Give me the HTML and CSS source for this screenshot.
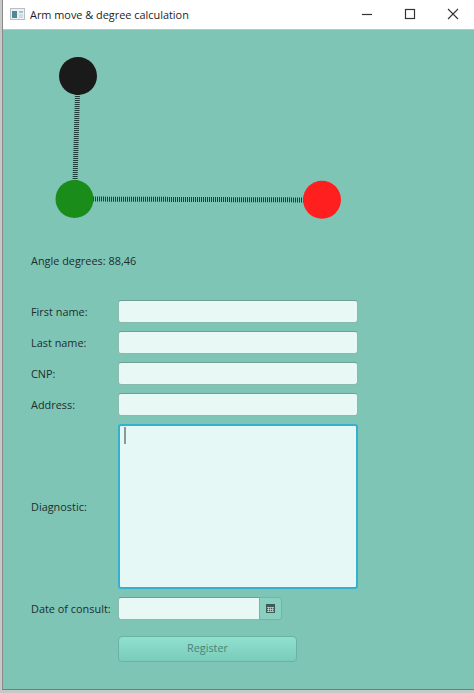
FILE: index.html
```html
<!DOCTYPE html>
<html lang="en">

<head>
    <meta charset="UTF-8">
    <meta name="viewport" content="width=device-width, initial-scale=1.0">
    <title>Arm move &amp; degree calculation</title>
    <link rel="stylesheet" href="styles.css">
</head>

<body>
    <div class="janela">
        <div class="titulo">
            <svg class="icone" width="15" height="13" viewBox="0 0 15 13">
                <rect x="0.5" y="0.5" width="14" height="11" fill="#eef0f2" stroke="#b9bec2"></rect>
                <rect x="2" y="3" width="5" height="7" fill="#4f8a94"></rect>
                <rect x="9" y="3" width="4" height="2" fill="#a9c4cc"></rect>
                <rect x="9" y="6" width="4" height="4" fill="#cfdde2"></rect>
            </svg>
            <span class="titulotexto">Arm move &amp; degree calculation</span>
            <div class="controles">
                <svg class="controle" width="43" height="29" viewBox="0 0 43 29">
                    <path d="M17 14.5H27" stroke="#333" stroke-width="1.2"></path>
                </svg>
                <svg class="controle" width="43" height="29" viewBox="0 0 43 29">
                    <rect x="17.5" y="9.5" width="9" height="9" fill="none" stroke="#333" stroke-width="1.2"></rect>
                </svg>
                <svg class="controle" width="43" height="29" viewBox="0 0 43 29">
                    <path d="M17 9L27 19M27 9L17 19" stroke="#333" stroke-width="1.1"></path>
                </svg>
            </div>
        </div>

        <svg class="braco" width="471" height="211" viewBox="0 1 471 211">
            <g fill="none" stroke="#1f3d3a" stroke-width="5" stroke-dasharray="1 1">
                <line x1="75" y1="47" x2="71.5" y2="170"></line>
                <line x1="72" y1="170" x2="320" y2="171"></line>
            </g>
            <circle cx="75" cy="47" r="19" fill="#1a1a1a"></circle>
            <circle cx="71.5" cy="170" r="19" fill="#1a8c1a"></circle>
            <circle cx="319" cy="170.8" r="19" fill="#ff1f1f"></circle>
        </svg>

        <div class="angulo">Angle degrees: 88,46</div>

        <form class="formulario">
            <label class="texto" for="firstName">First name:</label>
            <input class="input" type="text" id="firstName">

            <label class="texto" for="lastName">Last name:</label>
            <input class="input" type="text" id="lastName">

            <label class="texto" for="cnp">CNP:</label>
            <input class="input" type="text" id="cnp">

            <label class="texto" for="address">Address:</label>
            <input class="input" type="text" id="address">

            <label class="texto" for="diagnostic">Diagnostic:</label>
            <div class="area" id="diagnostic"><span class="cursor"></span></div>

            <label class="texto" for="consult">Date of consult:</label>
            <div class="data">
                <input class="input inputdata" type="text" id="consult">
                <div class="calendario">
                    <svg width="9" height="9" viewBox="0 0 9 9">
                        <rect width="9" height="9" fill="#3f5a57"></rect>
                        <path d="M1 3.5h7M1 5.5h7M1 7.5h7M2.5 3v5M4.5 3v5M6.5 3v5" stroke="#c5dcd6" stroke-width="0.7"></path>
                    </svg>
                </div>
            </div>

            <button type="button" class="botao">Register</button>
        </form>
    </div>
</body>

</html>
```

FILE: styles.css
```css
body {
    margin: 0;
    background-color: #c8c8c8;
    font-family: "Open Sans", sans-serif;
    color: #1d2e2b;
    height: 693px;
    overflow: hidden;
}

.janela {
    margin-left: 2px;
    width: 472px;
    height: 690px;
    box-sizing: border-box;
    background-color: #7fc5b6;
    border-left: 1px solid #8a8a8a;
    border-bottom: 1px solid #6f7f7b;
}

.titulo {
    display: flex;
    align-items: center;
    height: 30px;
    background-color: #ffffff;
    color: #1c1c1c;
    border-bottom: 1px solid #a5d2c8;
    box-sizing: border-box;
}

.icone {
    margin-left: 7px;
    margin-right: 5px;
}

.titulotexto {
    font-size: 10.9px;
    white-space: nowrap;
}

.controles {
    display: flex;
    margin-left: auto;
}

.controle {
    display: block;
}

.braco {
    display: block;
}

.angulo {
    font-size: 10.9px;
    line-height: 16px;
    margin-top: 12px;
    padding-left: 28px;
}

.formulario {
    display: grid;
    grid-template-columns: 87px 240px;
    grid-template-rows: 23px 23px 23px 23px 165px 23px 26px;
    row-gap: 8px;
    margin-top: 31px;
    padding-left: 28px;
}

.texto {
    font-size: 10.9px;
    align-self: center;
    white-space: nowrap;
}

.input {
    box-sizing: border-box;
    width: 100%;
    height: 23px;
    margin: 0;
    background-color: #e8f8f4;
    border: 1px solid #8ab9ae;
    border-top-color: #6f9f94;
    border-radius: 3px;
    outline: none;
}

.area {
    box-sizing: border-box;
    background-color: #e6f8f5;
    border: 2px solid #35b0d0;
    border-radius: 3px;
    padding: 1px 4px;
}

.cursor {
    display: block;
    width: 2px;
    height: 17px;
    background-color: #8a9a97;
}

.data {
    display: flex;
}

.inputdata {
    width: 141px;
    border-radius: 3px 0 0 3px;
    border-right: 0;
}

.calendario {
    display: flex;
    align-items: center;
    justify-content: center;
    width: 23px;
    height: 23px;
    box-sizing: border-box;
    background-color: #88d0c0;
    border: 1px solid #74b3a5;
    border-radius: 0 3px 3px 0;
}

.botao {
    grid-column: 2;
    width: 179px;
    height: 26px;
    margin-top: 8px;
    background: linear-gradient(#90e0ce, #7accba);
    border: 1px solid #69b3a3;
    border-radius: 4px;
    color: #4a8479;
    font-family: "Open Sans", sans-serif;
    font-size: 10.9px;
    padding: 0 0 3px;
}
```
